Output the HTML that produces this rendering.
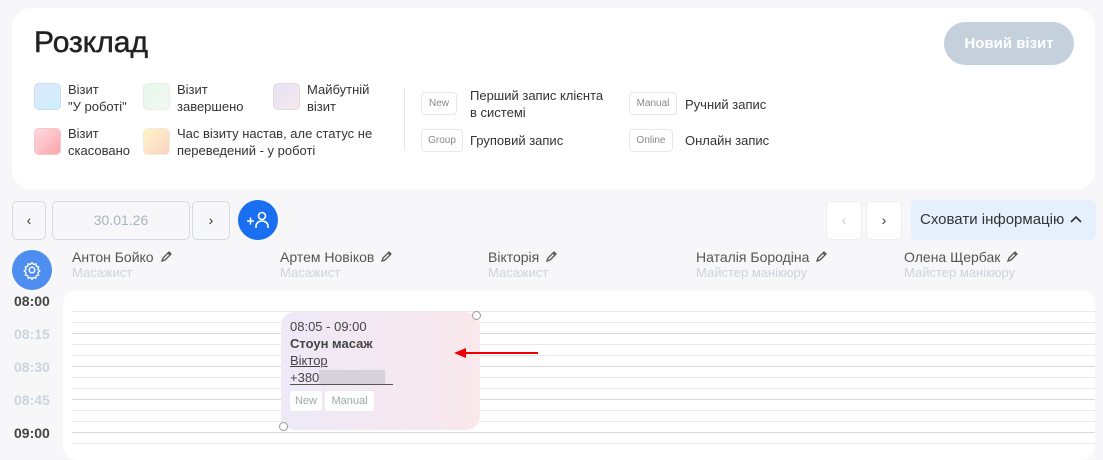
<!DOCTYPE html>
<html><head><meta charset="utf-8"><style>
*{box-sizing:border-box;margin:0;padding:0}
body{width:1103px;height:447px;overflow:hidden;background:#f7f7f9;font-family:"Liberation Sans",sans-serif;position:relative;color:#333}
.a{position:absolute}
.card{left:12px;top:8px;width:1083px;height:182px;background:#fff;border-radius:20px}
h1{position:absolute;left:34px;top:26px;font-size:30px;font-weight:normal;-webkit-text-stroke:0.5px #222;color:#222}
.btn{left:944px;top:22px;width:130px;height:43px;border-radius:22px;background:#c5d0dd;color:#fff;font-weight:bold;font-size:15px;text-align:center;line-height:43px}
.sw{width:27px;height:27px;border-radius:5px}
.lt{font-size:13px;line-height:17px;color:#333}
.tag{border:1px solid #e5e7eb;border-radius:4px;font-size:10px;color:#888;height:23px;display:flex;align-items:center;justify-content:center}
.nb{border:1px solid #d6dbe1;border-radius:5px;background:#f7f7f9;height:39px;text-align:center;line-height:37px;font-size:14px;color:#333}
.nm{font-size:14px;color:#555}
.nm svg{vertical-align:-1px;margin-left:6px}
.rl{font-size:13px;color:#ccd4de}
.tm{font-size:14px;font-weight:bold;left:14px}
.ln{left:72px;width:1023px;height:1px;background:#e8e8ea}
.ln.h{background:#d8d8da}
</style></head><body>
<div class="a card"></div>
<h1>Розклад</h1>
<div class="a btn">Новий візит</div>

<div class="a sw" style="left:34px;top:83px;background:linear-gradient(135deg,#dde8fb,#cdf0fe);border:1px solid #cde"></div>
<div class="a lt" style="left:68px;top:81px">Візит<br>"У роботі"</div>
<div class="a sw" style="left:143px;top:83px;background:linear-gradient(135deg,#e6f7ea,#f2f9f2);border:1px solid #e4efe6"></div>
<div class="a lt" style="left:177px;top:81px">Візит<br>завершено</div>
<div class="a sw" style="left:273px;top:83px;background:linear-gradient(135deg,#e5e2f6,#f8e8ee);border:1px solid #ddd"></div>
<div class="a lt" style="left:307px;top:81px">Майбутній<br>візит</div>
<div class="a sw" style="left:34px;top:128px;background:linear-gradient(135deg,#ffd9e2,#fca6a8);border:1px solid #f3c6cc"></div>
<div class="a lt" style="left:68px;top:125px">Візит<br>скасовано</div>
<div class="a sw" style="left:143px;top:128px;background:linear-gradient(135deg,#fff4c7,#fad3c4);border:1px solid #eed"></div>
<div class="a lt" style="left:177px;top:125px">Час візиту настав, але статус не<br>переведений - у роботі</div>

<div class="a" style="left:404px;top:88px;width:1px;height:62px;background:#e5e7eb"></div>
<div class="a tag" style="left:421px;top:92px;width:36px">New</div>
<div class="a lt" style="left:470px;top:87px">Перший запис клієнта<br>в системі</div>
<div class="a tag" style="left:421px;top:129px;width:42px">Group</div>
<div class="a lt" style="left:470px;top:132px">Груповий запис</div>
<div class="a tag" style="left:629px;top:92px;width:48px">Manual</div>
<div class="a lt" style="left:685px;top:96px">Ручний запис</div>
<div class="a tag" style="left:629px;top:129px;width:44px">Online</div>
<div class="a lt" style="left:685px;top:132px">Онлайн запис</div>

<div class="a nb" style="left:12px;top:201px;width:34px">‹</div>
<div class="a nb" style="left:52px;top:201px;width:138px;color:#aab4c0">30.01.26</div>
<div class="a nb" style="left:192px;top:201px;width:38px">›</div>
<div class="a" style="left:238px;top:200px;width:40px;height:40px;border-radius:50%;background:#1a6ef0">
<svg width="40" height="40"><path d="M9 21h7M12.5 17.5v7" stroke="#fff" stroke-width="1.6"/><circle cx="24" cy="16" r="3.5" fill="none" stroke="#fff" stroke-width="1.6"/><path d="M18 28v-2a6 5 0 0 1 12 0v2" fill="none" stroke="#fff" stroke-width="1.6"/></svg></div>

<div class="a nb" style="left:826px;top:201px;width:36px;background:#fff;border-color:#eee;color:#ccc">‹</div>
<div class="a nb" style="left:866px;top:201px;width:36px;background:#fff;border-color:#eee">›</div>
<div class="a" style="left:911px;top:200px;width:185px;height:40px;border-radius:5px;background:#e6f0fd;font-size:15px;line-height:40px;padding-left:9px;color:#333">Сховати інформацію<svg style="position:absolute;right:14px;top:15px" width="12" height="8"><path d="M1 7L6 2L11 7" fill="none" stroke="#333" stroke-width="1.6"/></svg></div>

<div class="a" style="left:12px;top:250px;width:40px;height:40px;border-radius:50%;background:#4d8ef0">
<svg width="40" height="40"><circle cx="20" cy="20" r="2.8" fill="none" stroke="#fff" stroke-width="1.4"/><path d="M20 12.5l1.5 2 2.4-.8.4 2.5 2.4.8-.8 2.4 2 1.6-2 1.5.8 2.4-2.4.8-.4 2.5-2.4-.8-1.5 2-1.5-2-2.4.8-.4-2.5-2.4-.8.8-2.4-2-1.5 2-1.6-.8-2.4 2.4-.8.4-2.5 2.4.8z" fill="none" stroke="#fff" stroke-width="1.3" stroke-linejoin="round"/></svg></div>

<div class="a nm" style="left:72px;top:249px">Антон Бойко<svg width="13" height="13"><path d="M2 11l1-3 6-6 2 2-6 6z M8 3l2 2" fill="none" stroke="#555" stroke-width="1.3"/></svg></div><div class="a rl" style="left:72px;top:265px">Масажист</div>
<div class="a nm" style="left:280px;top:249px">Артем Новіков<svg width="13" height="13"><path d="M2 11l1-3 6-6 2 2-6 6z M8 3l2 2" fill="none" stroke="#555" stroke-width="1.3"/></svg></div><div class="a rl" style="left:280px;top:265px">Масажист</div>
<div class="a nm" style="left:488px;top:249px">Вікторія<svg width="13" height="13"><path d="M2 11l1-3 6-6 2 2-6 6z M8 3l2 2" fill="none" stroke="#555" stroke-width="1.3"/></svg></div><div class="a rl" style="left:488px;top:265px">Масажист</div>
<div class="a nm" style="left:696px;top:249px">Наталія Бородіна<svg width="13" height="13"><path d="M2 11l1-3 6-6 2 2-6 6z M8 3l2 2" fill="none" stroke="#555" stroke-width="1.3"/></svg></div><div class="a rl" style="left:696px;top:265px">Майстер манікюру</div>
<div class="a nm" style="left:904px;top:249px">Олена Щербак<svg width="13" height="13"><path d="M2 11l1-3 6-6 2 2-6 6z M8 3l2 2" fill="none" stroke="#555" stroke-width="1.3"/></svg></div><div class="a rl" style="left:904px;top:265px">Майстер манікюру</div>

<div class="a" style="left:63px;top:290px;width:1032px;height:170px;background:#fff;border-radius:14px"></div>
<div class="a tm" style="top:293px;color:#444">08:00</div>
<div class="a tm" style="top:326px;color:#ccd4de">08:15</div>
<div class="a tm" style="top:359px;color:#ccd4de">08:30</div>
<div class="a tm" style="top:392px;color:#ccd4de">08:45</div>
<div class="a tm" style="top:425px;color:#444">09:00</div>
<div class="a ln" style="top:311px"></div><div class="a ln" style="top:322px"></div><div class="a ln h" style="top:333px"></div>
<div class="a ln" style="top:344px"></div><div class="a ln" style="top:355px"></div><div class="a ln h" style="top:366px"></div>
<div class="a ln" style="top:377px"></div><div class="a ln" style="top:388px"></div><div class="a ln h" style="top:399px"></div>
<div class="a ln" style="top:410px"></div><div class="a ln" style="top:421px"></div><div class="a ln h" style="top:432px"></div>
<div class="a ln" style="top:443px"></div>

<div class="a" style="left:281px;top:312px;width:199px;height:118px;border-radius:14px;background:linear-gradient(90deg,#ede9f7,#f9e8ec)"></div>
<div class="a" style="left:472px;top:311px;width:9px;height:9px;border-radius:50%;border:1px solid #999;background:#fff"></div>
<div class="a" style="left:279px;top:422px;width:9px;height:9px;border-radius:50%;border:1px solid #999;background:#fff"></div>
<div class="a" style="left:290px;top:318px;font-size:13px;line-height:17px;color:#444">08:05 - 09:00<br><b>Стоун масаж</b><br><u>Віктор</u></div>
<div class="a" style="left:290px;top:370px;font-size:13px;color:#444;width:103px;border-bottom:1px solid #555;height:15px">+380<span style="display:inline-block;width:66px;height:14px;background:#d8d2dc;vertical-align:-2px"></span></div>
<div class="a" style="left:290px;top:391px;width:32px;height:20px;background:#fff;border-radius:3px;font-size:11px;color:#9aa;text-align:center;line-height:20px">New</div>
<div class="a" style="left:325px;top:391px;width:49px;height:20px;background:#fff;border-radius:3px;font-size:11px;color:#9aa;text-align:center;line-height:20px">Manual</div>
<svg class="a" style="left:452px;top:346px" width="90" height="14"><path d="M86 7H12" stroke="#e00" stroke-width="2"/><path d="M2 7L14 2V12Z" fill="#e00"/></svg>
</body></html>
